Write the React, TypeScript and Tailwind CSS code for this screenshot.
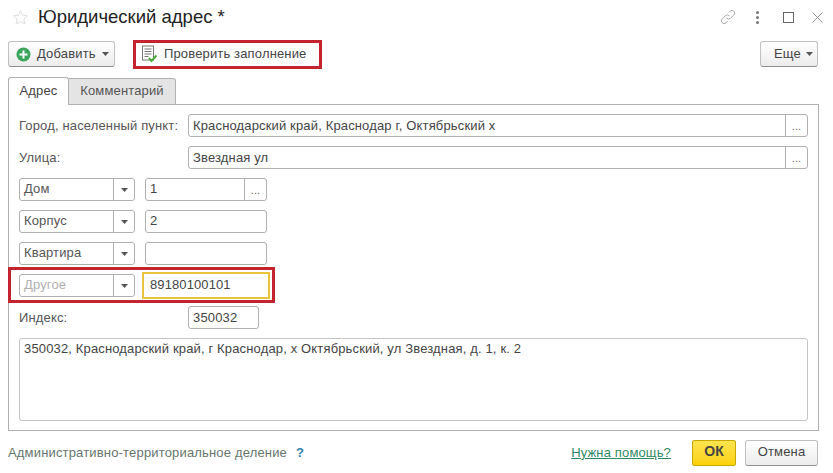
import React from "react";

const Caret = () => (
  <svg width="7" height="4" viewBox="0 0 7 4" className="shrink-0"><path d="M0 0h7L3.5 4z" fill="#555" /></svg>
);

const Dots = () => (
  <div className="w-[22px] h-full border-l border-[#b0b0b0] flex items-end justify-center pb-[4px] text-[11px] leading-[12px] text-[#666]">...</div>
);

const Field = ({ className = "", value = "", dots = false, raised = false }: { className?: string; value?: string; dots?: boolean; raised?: boolean }) => (
  <div className={`h-[23px] border border-[#b0b0b0] rounded-[3px] bg-white flex items-center ${className}`}>
    <div className={`flex-1 min-w-0 pl-[4px] text-[#444] text-[13px] leading-[19px] whitespace-nowrap overflow-hidden ${raised ? "pb-[2px]" : "pb-[1px]"}`}>{value}</div>
    {dots && <Dots />}
  </div>
);

const Select = ({ value, muted = false }: { value: string; muted?: boolean }) => (
  <div className="w-[116px] h-[23px] border border-[#b0b0b0] rounded-[3px] bg-white flex items-center shrink-0">
    <div className={`flex-1 pl-[4px] text-[13px] leading-[19px] pb-[2px] ${muted ? "text-[#b0b0b0]" : "text-[#555]"}`}>{value}</div>
    <div className="w-[21px] h-full border-l border-[#b0b0b0] flex items-center justify-center"><Caret /></div>
  </div>
);

const btn = "h-[26px] border border-[#c0c0c0] border-b-[#8f8f8f] rounded-[3px] bg-gradient-to-b from-white to-[#ececec] flex items-center text-[#444] text-[13px]";

export default function App() {
  return (
    <div className="relative w-[833px] h-[473px] bg-white overflow-hidden tracking-[0.15px]" style={{ fontFamily: '"Liberation Sans", Arial, sans-serif' }}>
      {/* Title */}
      <div className="h-[41px] flex items-start pl-[12px] pr-[10px]">
        <svg width="17" height="17" viewBox="0 0 24 24" className="mt-[9px]" fill="none" stroke="#dcdcdc" strokeWidth="1.4"><path d="M12 2.5l2.9 6.3 6.9.8-5.1 4.7 1.4 6.8-6.1-3.4-6.1 3.4 1.4-6.8-5.1-4.7 6.9-.8z" /></svg>
        <div className="ml-[9px] mt-[4px] text-[18.5px] leading-[26px] tracking-normal text-[#222]">Юридический адрес *</div>
        <div className="flex-1" />
        <div className="flex items-center mt-[8px] h-[18px]">
          <svg width="16" height="16" viewBox="0 0 24 24" fill="none" stroke="#a0a0a0" strokeWidth="1.4" strokeLinecap="round">
            <path d="M10 14a4 4 0 0 0 5.7 0l5-5A4 4 0 0 0 15 3.3l-1.7 1.7" />
            <path d="M14 10a4 4 0 0 0-5.7 0l-5 5A4 4 0 0 0 9 20.7l1.7-1.7" />
          </svg>
          <div className="ml-[20px] flex flex-col gap-[2px]">
            <div className="w-[3px] h-[3px] bg-[#777] rounded-full" />
            <div className="w-[3px] h-[3px] bg-[#777] rounded-full" />
            <div className="w-[3px] h-[3px] bg-[#777] rounded-full" />
          </div>
          <div className="ml-[24px] w-[11px] h-[11px] border border-[#666]" />
          <svg width="11" height="11" viewBox="0 0 11 11" className="ml-[18px]" stroke="#888" strokeWidth="0.9"><path d="M0.5 0.5l10 10M10.5 0.5l-10 10" /></svg>
        </div>
      </div>

      {/* Toolbar */}
      <div className="h-[27px] pl-[8px] pr-[15px] flex items-start">
        <div className={`${btn} w-[107px] pl-[7px]`}>
          <svg width="15" height="15" viewBox="0 0 15 15" className="shrink-0"><circle cx="7.5" cy="7.5" r="7" fill="#3ba55d" /><path d="M7.5 3.5v8M3.5 7.5h8" stroke="#fff" strokeWidth="2" /></svg>
          <span className="ml-[6px] pb-[1px]">Добавить</span>
          <span className="ml-[6px]"><Caret /></span>
        </div>
        <div className="ml-[25px] h-[26px] flex items-center">
          <svg width="17" height="18" viewBox="0 0 17 18" className="shrink-0 ml-[1px]" fill="none">
            <rect x="1.5" y="1" width="11" height="14" fill="#fff" stroke="#777" />
            <path d="M3.5 4h7M3.5 6.5h7M3.5 9h7M3.5 11.5h4" stroke="#777" />
            <path d="M8 13l2.5 3L15.5 10.5" stroke="#4da83c" strokeWidth="2" />
          </svg>
          <span className="ml-[6px] pb-[1px] text-[13px] text-[#444] whitespace-nowrap">Проверить заполнение</span>
        </div>
        <div className="flex-1" />
        <div className={`${btn} w-[58px] pl-[13px]`}>
          <span className="pb-[1px]">Еще</span>
          <span className="ml-[5px]"><Caret /></span>
        </div>
      </div>

      {/* Tabs */}
      <div className="mt-[9px] pl-[8px] h-[28px] flex items-end relative z-10">
        <div className="w-[61px] h-[28px] border border-[#b0b0b0] border-b-0 rounded-t-[3px] bg-white flex items-center justify-center pb-[2px] text-[13px] text-[#444]">Адрес</div>
        <div className="w-[107px] h-[27px] border border-l-0 border-[#b0b0b0] rounded-tr-[3px] bg-[#e4e4e4] flex items-center justify-center pb-[2px] text-[13px] text-[#555]">Комментарий</div>
      </div>

      {/* Panel */}
      <div className="relative -mt-[1px] ml-[8px] w-[811px] h-[327px] border border-[#b0b0b0] pl-[10px] pr-[10px] pt-[9px] flex flex-col">
        <div className="flex items-center h-[23px]">
          <div className="w-[169px] shrink-0 text-[13px] text-[#555] whitespace-nowrap">Город, населенный пункт:</div>
          <Field className="flex-1" value="Краснодарский край, Краснодар г, Октябрьский х" dots />
        </div>
        <div className="mt-[9px] flex items-center h-[23px]">
          <div className="w-[169px] shrink-0 text-[13px] text-[#555]">Улица:</div>
          <Field className="flex-1" value="Звездная ул" dots />
        </div>
        <div className="mt-[9px] flex items-center gap-[10px]">
          <Select value="Дом" />
          <Field className="w-[122px]" value="1" dots raised />
        </div>
        <div className="mt-[9px] flex items-center gap-[10px]">
          <Select value="Корпус" />
          <Field className="w-[122px]" value="2" raised />
        </div>
        <div className="mt-[9px] flex items-center gap-[10px]">
          <Select value="Квартира" />
          <Field className="w-[122px]" />
        </div>
        <div className="mt-[7px] flex items-center gap-[7px]">
          <Select value="Другое" muted />
          <div className="w-[128px] h-[27px] border-2 border-[#e9c33c] bg-white flex items-center pl-[6px] pb-[2px] text-[13px] text-[#444] shrink-0 tracking-[0.1px]">89180100101</div>
        </div>
        <div className="mt-[7px] flex items-center h-[23px]">
          <div className="w-[169px] shrink-0 text-[13px] text-[#555]">Индекс:</div>
          <Field className="w-[71px]" value="350032" />
        </div>
        <div className="mt-[9px] h-[83px] border border-[#c4c4c4] rounded-[3px] px-[4px] pt-[1px] text-[13px] leading-[17px] text-[#444]">
          350032, Краснодарский край, г Краснодар, х Октябрьский, ул Звездная, д. 1, к. 2
        </div>
      </div>

      {/* Footer */}
      <div className="mt-[8px] pl-[8px] pr-[15px] flex items-center h-[27px]">
        <span className="text-[13px] text-[#66756c] tracking-[0.17px]">Административно-территориальное деление</span>
        <span className="ml-[9px] text-[13px] font-bold text-[#2f7fa8]">?</span>
        <div className="flex-1" />
        <span className="text-[13px] text-[#2f8a63] underline">Нужна помощь?</span>
        <div className="ml-[21px] w-[44px] h-[26px] rounded-[2px] border border-[#c9a800] bg-gradient-to-b from-[#ffe44d] to-[#fbd200] flex items-center justify-center pb-[2px] text-[14px] font-bold text-[#444]">ОК</div>
        <div className={`${btn} ml-[9px] w-[73px] justify-center pb-[2px]`}>Отмена</div>
      </div>

      {/* Red annotations */}
      <div className="absolute left-[133px] top-[40px] w-[189px] h-[29px] border-[3px] border-[#c4242f] pointer-events-none" />
      <div className="absolute left-[8px] top-[267px] w-[267px] h-[36px] border-[3px] border-[#c4242f] pointer-events-none" />
    </div>
  );
}
